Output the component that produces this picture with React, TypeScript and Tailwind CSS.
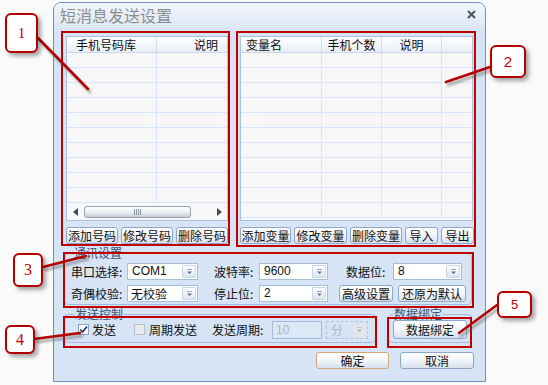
import React from 'react';

function Btn({ w, h = 'h-[17px]', className = '', children }: { w: string; h?: string; className?: string; children: React.ReactNode }) {
  return (
    <div
      className={`flex items-center justify-center shrink-0 rounded-[3px] border bg-linear-to-b from-[#ffffff] via-[#f1f5fa] to-[#d5e0ee] text-[12px] leading-none text-[#111] ${w} ${h} ${className || 'border-[#8fa7c7]'}`}
    >
      {children}
    </div>
  );
}

function Tri({ color = '#5d708a' }: { color?: string }) {
  return (
    <svg width="7" height="6" viewBox="0 0 7 6">
      <rect x="1" y="0" width="5" height="1" fill={color} opacity="0.6" />
      <path d="M1 2.5 L6 2.5 L3.5 5 Z" fill={color} />
    </svg>
  );
}

function Combo({ w, value }: { w: string; value: string }) {
  return (
    <div className={`flex h-[17px] shrink-0 border border-[#a5bedc] bg-white ${w}`}>
      <div className="flex-1 pl-[4px] text-[12px] leading-[15px] text-[#111] font-[Liberation_Sans,sans-serif]">{value}</div>
      <div className="m-[1px] flex w-[14px] items-center justify-center rounded-[1px] border border-[#c9d7e9] bg-linear-to-b from-white to-[#dce5f0]">
        <Tri />
      </div>
    </div>
  );
}

function Label({ w, children }: { w: string; children: React.ReactNode }) {
  return <div className={`shrink-0 text-[12px] leading-[17px] text-[#111] ${w}`}>{children}</div>;
}

export default function App() {
  const leftRows = Array.from({ length: 10 });
  const rightRows = Array.from({ length: 11 });
  return (
    <div className="relative h-[385px] w-[548px] overflow-hidden bg-[#fafafa] pl-[53px] pt-[2px] font-[Noto_Sans_CJK_SC,Noto_Sans,sans-serif]">
      {/* Dialog */}
      <div className="flex h-[380px] w-[433px] flex-col rounded-t-[8px] border border-[#6f8fbd] bg-[#d6e4f6]">
        <div className="flex h-[28px] shrink-0 items-start justify-between rounded-t-[7px] bg-linear-to-b from-[#f2f6fb] to-[#dbe6f5] pl-[6px] pr-[9px] pt-[3px]">
          <div className="text-[16px] leading-[18px] text-[#8d8d8d]">短消息发送设置</div>
          <svg className="mt-[4px]" width="9" height="9" viewBox="0 0 9 9">
            <path d="M1 1 L8 8 M8 1 L1 8" stroke="#4d5663" strokeWidth="2" />
          </svg>
        </div>

        <div className="flex flex-1 flex-col pl-[10px] pt-[5px]">
          {/* Top row */}
          <div className="flex gap-[12px] pl-[2px]">
            {/* Left panel */}
            <div className="flex flex-col">
              <div className="flex h-[185px] w-[162px] flex-col border border-[#a9c2e1] bg-[#f7f7f7]">
                <div className="flex h-[16px] shrink-0 border-b border-[#c9d7e8] bg-linear-to-b from-white to-[#e8eef7] text-[12px] leading-[15px] text-[#111]">
                  <div className="w-[90px] border-r border-[#d3deec] pl-[9px]">手机号码库</div>
                  <div className="flex-1 pr-[9px] text-right">说明</div>
                </div>
                {leftRows.map((_, i) => (
                  <div key={i} className="flex h-[15px] shrink-0 border-b border-[#d5e6f8]">
                    <div className="w-[90px] border-r border-[#d5e6f8]" />
                    <div className="flex-1" />
                  </div>
                ))}
                <div className="flex flex-1 items-center pl-[6px] pr-[5px]">
                  <svg width="5" height="8" viewBox="0 0 5 8">
                    <path d="M5 0 L0 4 L5 8 Z" fill="#3f4b5b" />
                  </svg>
                  <div className="ml-[6px] flex h-[12px] w-[107px] items-center justify-center rounded-[3px] border border-[#98a4b3] bg-linear-to-b from-white via-[#eceff3] to-[#c5cdd8]">
                    <svg width="8" height="6" viewBox="0 0 8 6">
                      <path d="M0.5 0 V6 M2.5 0 V6 M4.5 0 V6 M6.5 0 V6" stroke="#8a95a4" strokeWidth="1" />
                    </svg>
                  </div>
                  <div className="flex-1" />
                  <svg width="5" height="8" viewBox="0 0 5 8">
                    <path d="M0 0 L5 4 L0 8 Z" fill="#3f4b5b" />
                  </svg>
                </div>
              </div>
              <div className="mt-[6px] flex gap-[3px]">
                <Btn w="w-[52px]">添加号码</Btn>
                <Btn w="w-[52px]">修改号码</Btn>
                <Btn w="w-[52px]">删除号码</Btn>
              </div>
            </div>

            {/* Right panel */}
            <div className="flex flex-col">
              <div className="flex h-[185px] w-[233px] flex-col border border-[#a9c2e1] bg-[#f7f7f7]">
                <div className="flex h-[16px] shrink-0 border-b border-[#c9d7e8] bg-linear-to-b from-white to-[#e8eef7] text-[12px] leading-[15px] text-[#111]">
                  <div className="w-[81px] border-r border-[#d3deec] pl-[5px]">变量名</div>
                  <div className="w-[60px] border-r border-[#d3deec] text-center">手机个数</div>
                  <div className="w-[60px] border-r border-[#d3deec] text-center">说明</div>
                  <div className="flex-1" />
                </div>
                {rightRows.map((_, i) => (
                  <div key={i} className="flex h-[15px] shrink-0 border-b border-[#d5e6f8]">
                    <div className="w-[81px] border-r border-[#d5e6f8]" />
                    <div className="w-[60px] border-r border-[#d5e6f8]" />
                    <div className="w-[60px] border-r border-[#d5e6f8]" />
                    <div className="flex-1" />
                  </div>
                ))}
              </div>
              <div className="mt-[6px] flex gap-[3px]">
                <Btn w="w-[51px]">添加变量</Btn>
                <Btn w="w-[53px]">修改变量</Btn>
                <Btn w="w-[52px]">删除变量</Btn>
                <Btn w="w-[33px]">导入</Btn>
                <Btn w="w-[33px]">导出</Btn>
              </div>
            </div>
          </div>

          {/* 通讯设置 */}
          <fieldset className="mt-[3px] w-[408px] rounded-[4px] border border-[#a3bcdc] pb-[2px] pl-[6px]">
            <legend className="ml-[2px] px-[1px] text-[12px] leading-[12px] text-[#3b5477]">通讯设置</legend>
            <div className="flex flex-col gap-[5px] pt-[4px]">
              <div className="flex items-center">
                <Label w="w-[56px]">串口选择:</Label>
                <Combo w="w-[71px]" value="COM1" />
                <div className="ml-[16px]">
                  <Label w="w-[45px]">波特率:</Label>
                </div>
                <Combo w="w-[69px]" value="9600" />
                <div className="ml-[18px]">
                  <Label w="w-[47px]">数据位:</Label>
                </div>
                <Combo w="w-[69px]" value="8" />
              </div>
              <div className="flex items-center">
                <Label w="w-[56px]">奇偶校验:</Label>
                <div className="flex h-[17px] w-[71px] shrink-0 border border-[#a5bedc] bg-white">
                  <div className="flex-1 pl-[3px] text-[12px] leading-[15px] text-[#111]">无校验</div>
                  <div className="m-[1px] flex w-[14px] items-center justify-center rounded-[1px] border border-[#c9d7e9] bg-linear-to-b from-white to-[#dce5f0]">
                    <Tri />
                  </div>
                </div>
                <div className="ml-[16px]">
                  <Label w="w-[45px]">停止位:</Label>
                </div>
                <Combo w="w-[69px]" value="2" />
                <Btn w="w-[54px]" className="ml-[11px] border-[#8fa7c7]">高级设置</Btn>
                <Btn w="w-[68px]" className="ml-[5px] border-[#8fa7c7]">还原为默认</Btn>
              </div>
            </div>
          </fieldset>

          {/* 发送控制 + 数据绑定 */}
          <div className="mt-[3px] flex gap-[12px]">
            <fieldset className="w-[312px] rounded-[4px] border border-[#a3bcdc] pb-[3px] pl-[13px]">
              <legend className="ml-[-4px] px-[1px] text-[12px] leading-[12px] text-[#3b5477]">发送控制</legend>
              <div className="flex h-[19px] items-center pt-[0px]">
                <div className="flex h-[11px] w-[11px] shrink-0 items-center justify-center border border-[#8aa2c2] bg-[#f7f9fc]">
                  <svg width="9" height="9" viewBox="0 0 9 9">
                    <path d="M1.2 4.6 L3.6 7 L8 1.5" stroke="#27395a" strokeWidth="1.6" fill="none" />
                  </svg>
                </div>
                <div className="ml-[3px] text-[12px] leading-[17px] text-[#111]">发送</div>
                <div className="ml-[18px] h-[11px] w-[11px] shrink-0 border border-[#b7bfca] bg-[#e9ebee]" />
                <div className="ml-[4px] text-[12px] leading-[17px] text-[#111]">周期发送</div>
                <div className="ml-[15px] w-[60px] shrink-0 text-[12px] leading-[17px] text-[#111]">发送周期:</div>
                <div className="flex h-[18px] w-[50px] shrink-0 items-center border border-[#a2badb] bg-[#dde8f6] pl-[3px] text-[12px] leading-none text-[#aab5c6] font-[Liberation_Sans,sans-serif]">
                  10
                </div>
                <div className="ml-[4px] flex h-[18px] w-[42px] shrink-0 border border-dashed border-[#b9c6d6]">
                  <div className="flex-1 pl-[4px] text-[12px] leading-[16px] text-[#aeb7c4]">分</div>
                  <div className="m-[1px] flex w-[13px] items-center justify-center bg-[#e1e5eb]">
                    <Tri color="#a9b1bc" />
                  </div>
                </div>
              </div>
            </fieldset>
            <fieldset className="w-[84px] rounded-[4px] border border-[#a3bcdc] pb-[3px] pl-[4px]">
              <legend className="ml-[0px] px-[1px] text-[12px] leading-[12px] text-[#3b5477]">数据绑定</legend>
              <div className="flex h-[19px] items-center">
                <Btn w="w-[74px]" h="h-[19px]" className="border-[#8fa7c7]">
                  数据绑定
                </Btn>
              </div>
            </fieldset>
          </div>

          {/* Bottom buttons */}
          <div className="mt-[9px] flex justify-end gap-[11px] pr-[11px]">
            <Btn w="w-[73px]" className="border-[#d3a57a]">确定</Btn>
            <Btn w="w-[74px]">取消</Btn>
          </div>
        </div>
      </div>

      {/* Annotation red boxes */}
      <div className="pointer-events-none absolute left-[61px] top-[31px] h-[215px] w-[169px] border-2 border-[#c00000]" />
      <div className="pointer-events-none absolute left-[236px] top-[31px] h-[216px] w-[240px] border-2 border-[#c00000]" />
      <div className="pointer-events-none absolute left-[63px] top-[252px] h-[56px] w-[411px] border-2 border-[#c00000]" />
      <div className="pointer-events-none absolute left-[63px] top-[316px] h-[32px] w-[314px] border-2 border-[#c00000]" />
      <div className="pointer-events-none absolute left-[387px] top-[317px] h-[31px] w-[85px] border-2 border-[#c00000]" />

      {/* Callout lines */}
      <svg className="pointer-events-none absolute left-0 top-0" width="548" height="385" viewBox="0 0 548 385">
        <defs>
          <filter id="blur" x="-20%" y="-20%" width="140%" height="140%">
            <feGaussianBlur stdDeviation="1.2" />
          </filter>
        </defs>
        <g stroke="#555" strokeWidth="3" strokeLinecap="round" opacity="0.45" filter="url(#blur)">
          <line x1="40" y1="41" x2="90" y2="92" />
          <line x1="492" y1="70" x2="448" y2="85" />
          <line x1="45" y1="270" x2="88" y2="259" />
          <line x1="36" y1="342" x2="82" y2="336" />
          <line x1="499" y1="308" x2="461" y2="336" />
        </g>
        <g stroke="#b40000" strokeWidth="2.5" strokeLinecap="round">
          <line x1="38" y1="38" x2="88" y2="89" />
          <line x1="490" y1="67" x2="446" y2="82" />
          <line x1="43" y1="267" x2="86" y2="256" />
          <line x1="34" y1="339" x2="80" y2="333" />
          <line x1="497" y1="305" x2="459" y2="333" />
        </g>
      </svg>

      {/* Callout number boxes */}
      <div className="absolute left-[5px] top-[13px] flex h-[40px] w-[33px] items-center justify-center rounded-[6px] border-2 border-[#b40000] bg-white shadow-[3px_3px_4px_rgba(0,0,0,0.35)] text-[15px] leading-none text-[#c00000] font-[Liberation_Serif,serif]">
        1
      </div>
      <div className="absolute left-[490px] top-[45px] flex h-[33px] w-[36px] items-center justify-center rounded-[6px] border-2 border-[#b40000] bg-white shadow-[3px_3px_4px_rgba(0,0,0,0.35)] text-[15px] leading-none text-[#c00000] font-[Liberation_Sans,sans-serif]">
        2
      </div>
      <div className="absolute left-[13px] top-[253px] flex h-[34px] w-[30px] items-center justify-center rounded-[6px] border-2 border-[#b40000] bg-white shadow-[3px_3px_4px_rgba(0,0,0,0.35)] text-[16px] leading-none text-[#c00000] font-[Liberation_Serif,serif]">
        3
      </div>
      <div className="absolute left-[5px] top-[325px] flex h-[29px] w-[30px] items-center justify-center rounded-[6px] border-2 border-[#b40000] bg-white shadow-[3px_3px_4px_rgba(0,0,0,0.35)] text-[16px] leading-none text-[#c00000] font-[Liberation_Serif,serif]">
        4
      </div>
      <div className="absolute left-[497px] top-[291px] flex h-[27px] w-[35px] items-center justify-center rounded-[6px] border-2 border-[#b40000] bg-white shadow-[3px_3px_4px_rgba(0,0,0,0.35)] text-[13px] leading-none text-[#c00000] font-[Liberation_Sans,sans-serif]">
        5
      </div>
    </div>
  );
}
